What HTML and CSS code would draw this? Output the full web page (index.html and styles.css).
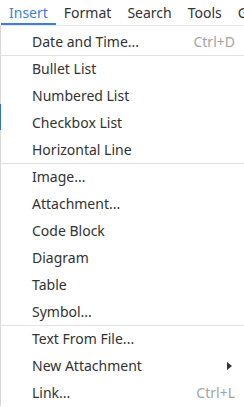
FILE: index.html
```html
<!DOCTYPE html>
<html lang="en">
<head>
  <meta charset="UTF-8" />
  <title>Insert menu</title>
  <meta name="viewport" content="width=device-width, initial-scale=1.0" />
  <link rel="stylesheet" href="styles.css">
</head>
<body>
  <div class="menubar">
    <div class="tab active">Insert</div>
    <div class="tab">Format</div>
    <div class="tab">Search</div>
    <div class="tab">Tools</div>
    <div class="tab">Go</div>
  </div>

  <div class="below">
    <div class="behind">
      <span class="mark"></span>
    </div>
    <div class="popup">
      <div class="item"><span>Date and Time...</span><span class="key">Ctrl+D</span></div>
      <div class="sep"></div>
      <div class="item"><span>Bullet List</span></div>
      <div class="item"><span>Numbered List</span></div>
      <div class="item"><span>Checkbox List</span></div>
      <div class="item"><span>Horizontal Line</span></div>
      <div class="sep"></div>
      <div class="item"><span>Image...</span></div>
      <div class="item"><span>Attachment...</span></div>
      <div class="item"><span>Code Block</span></div>
      <div class="item"><span>Diagram</span></div>
      <div class="item"><span>Table</span></div>
      <div class="item"><span>Symbol...</span></div>
      <div class="sep"></div>
      <div class="item"><span>Text From File...</span></div>
      <div class="item"><span>New Attachment</span><span class="arrow"></span></div>
      <div class="item"><span>Link...</span><span class="key">Ctrl+L</span></div>
    </div>
  </div>
</body>
</html>
```

FILE: styles.css
```css
body { margin: 0; font-family: "Noto Sans", sans-serif; font-size: 14px; color: #323232; background: #fff; width: 244px; height: 407px; overflow: hidden; }
.menubar { display: flex; height: 26px; border-bottom: 1px solid #e6e6e6; box-sizing: border-box; white-space: nowrap; overflow: hidden; }
.tab { padding: 1px 8px 0; line-height: 23px; flex-shrink: 0; }
.tab.active { margin-left: 1px; color: #3d7fd6; border-bottom: 2px solid #3d7fd6; }
.below { display: flex; }
.behind { width: 1px; background: #d8d8d8; }
.mark { display: block; height: 26px; margin-top: 78px; background: #2f74d0; }
.popup { flex: 1; padding-top: 2px; background: #fff; }
.item { display: flex; align-items: center; justify-content: space-between; height: 27px; padding: 0 9px 0 31px; white-space: nowrap; }
.key { color: #a3a3a3; }
.sep { height: 1px; background: #e2e2e2; margin-bottom: -1px; }
.sep:last-of-type { margin-bottom: 0; }
.arrow { width: 0; height: 0; border-left: 5px solid #333; border-top: 4px solid transparent; border-bottom: 4px solid transparent; margin-right: 3px; }
```
